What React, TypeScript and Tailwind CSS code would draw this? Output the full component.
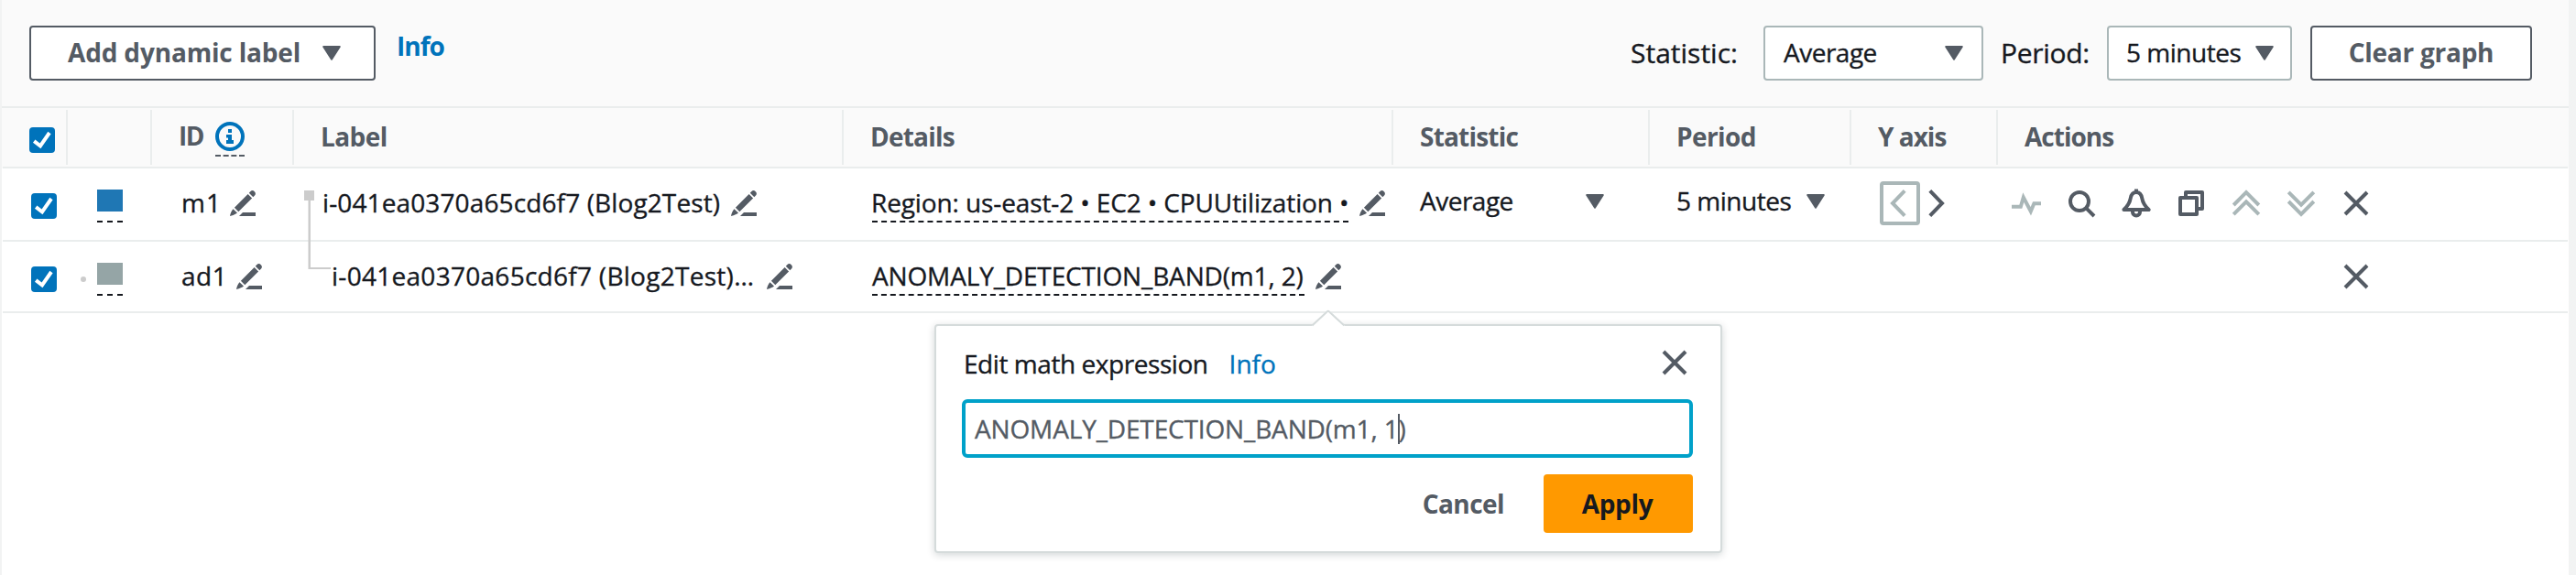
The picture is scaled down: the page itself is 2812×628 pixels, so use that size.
import type { ReactNode } from "react";

type IconProps = { children: ReactNode; className?: string };

function Icon({ children, className = "" }: IconProps) {
  return (
    <svg
      viewBox="0 0 16 16"
      className={`size-8 shrink-0 fill-none stroke-current stroke-2 ${className}`}
    >
      {children}
    </svg>
  );
}

const CloseIcon = () => (
  <Icon>
    <path d="M2 2l12 12M14 2L2 14" />
  </Icon>
);

function Pencil({ className = "" }: { className?: string }) {
  return (
    <svg viewBox="0 0 28 28" className={`size-7 shrink-0 fill-[#545b64] ${className}`}>
      <path d="M22.2 1.2Q24.6-1 26.8 1.2T26.8 5.8L25.3 7.2 20.8 2.7zM19.6 4L24.1 8.5 9.3 23.2 4.9 18.8zM3.5 20.2L8 24.6Q6 26.6 0 28 1 22.6 3.5 20.2zM14 24H28V28H10z" />
    </svg>
  );
}

function Caret({ className = "" }: { className?: string }) {
  return (
    <svg
      viewBox="0 0 20 16"
      className={`h-4 w-5 shrink-0 fill-[#545b64] stroke-[#545b64] stroke-2 ${className}`}
    >
      <path d="M1.2 1h17.6L10 14.6z" strokeLinejoin="round" />
    </svg>
  );
}

function Checkbox({ className = "" }: { className?: string }) {
  return (
    <span
      role="checkbox"
      aria-checked="true"
      className={`block size-7 shrink-0 rounded-[4px] bg-[#0073bb] ${className}`}
    >
      <svg viewBox="0 0 28 28" className="size-7 fill-none stroke-white stroke-4">
        <path d="M5.2 15.2L12 20.4L22 6" />
      </svg>
    </span>
  );
}

function InfoIcon() {
  return (
    <span className="mt-[6px] h-[38px] w-8 border-b-2 border-dashed border-[#545b64]">
      <svg viewBox="0 0 32 32" className="size-8">
        <circle cx="16" cy="16" r="14" className="fill-none stroke-[#0073bb] stroke-4" />
        <path
          d="M14 8h4v4h-4zM12 14h6v6h2v4h-8v-4h2v-2.500h-2z"
          className="fill-[#0073bb]"
        />
      </svg>
    </span>
  );
}

function HeaderCell({ className, children }: { className: string; children?: ReactNode }) {
  return (
    <div
      className={`flex h-15 shrink-0 items-center border-[#eaeded] pb-[2px] font-bold text-[#545b64] ${className}`}
    >
      {children}
    </div>
  );
}

function Cell({ className, children }: { className: string; children?: ReactNode }) {
  return (
    <div className={`flex shrink-0 items-start [-webkit-text-stroke-width:0.35px] ${className}`}>
      {children}
    </div>
  );
}

function Toolbar() {
  return (
    <div className="flex h-[118px] items-start border-b-2 border-[#eaeded] bg-[#fafafa] pt-7 pr-10 pl-[30px]">
      <button className="flex h-15 w-[378px] items-center justify-between rounded-[4px] border-2 border-[#545b64] bg-white pr-9 pb-[2px] pl-10 font-bold tracking-[-0.17px] text-[#545b64]">
        Add dynamic label
        <Caret className="mt-[2px]" />
      </button>
      <a className="mt-[2px] ml-[23px] font-bold tracking-[-0.97px] text-[#0073bb]">Info</a>

      <div className="ml-auto flex items-start [-webkit-text-stroke-width:0.35px]">
        <span className="mt-[10px] w-[145px] text-[30px] leading-10">Statistic:</span>
        <div className="flex h-15 w-[240px] items-center justify-between rounded-[4px] border-2 border-[#aab7b8] bg-white pr-5 pb-[2px] pl-5 tracking-[-0.5px]">
          Average
          <Caret className="mt-[2px]" />
        </div>
        <span className="mt-[10px] ml-[19px] w-[116px] text-[30px] leading-10 tracking-[-0.3px]">
          Period:
        </span>
        <div className="flex h-15 w-[202px] items-center justify-between rounded-[4px] border-2 border-[#aab7b8] bg-white pr-[18px] pb-[2px] pl-[19px] tracking-[-0.48px]">
          5 minutes
          <Caret className="mt-[2px]" />
        </div>
        <button className="ml-5 flex h-15 w-[242px] items-center justify-center rounded-[4px] border-2 border-[#545b64] bg-white pb-[2px] font-bold tracking-[-0.26px] text-[#545b64] [-webkit-text-stroke-width:0px]">
          Clear graph
        </button>
      </div>
    </div>
  );
}

function TableHeader() {
  return (
    <div className="-mx-px bg-[#fafafa] px-px">
      <div className="flex h-[66px] border-b-2 border-[#eaeded] pt-[2px]">
        <HeaderCell className="w-[71px] border-r-2 pl-[29px]">
          <Checkbox className="mt-2" />
        </HeaderCell>
        <HeaderCell className="w-[92px] border-r-2" />
        <HeaderCell className="w-[155px] border-r-2 pl-[29px]">
          <span className="mb-[2px] w-10 tracking-[-1.5px]">ID</span>
          <InfoIcon />
        </HeaderCell>
        <HeaderCell className="w-[600px] border-r-2 pl-[29px] tracking-[-0.57px]">Label</HeaderCell>
        <HeaderCell className="w-[600px] border-r-2 pl-[29px] tracking-[-0.8px]">
          Details
        </HeaderCell>
        <HeaderCell className="w-[280px] border-r-2 pl-[29px] tracking-[-0.79px]">
          Statistic
        </HeaderCell>
        <HeaderCell className="w-[220px] border-r-2 pl-[29px] tracking-[-0.6px]">Period</HeaderCell>
        <HeaderCell className="w-[160px] border-r-2 pl-[29px] tracking-[-1px]">Y axis</HeaderCell>
        <HeaderCell className="flex-1 pl-[29px] tracking-[-0.98px]">Actions</HeaderCell>
      </div>
    </div>
  );
}

function MetricRow() {
  return (
    <div className="flex h-20 border-b-2 border-[#eaeded]">
      <Cell className="w-[71px] pt-[27px] pl-[31px]">
        <Checkbox />
      </Cell>
      <Cell className="w-[92px] pt-[23px] pl-8">
        <span className="h-9 w-7 border-b-2 border-dashed border-[#16191f]">
          <span className="block h-6 bg-[#1f77b4]" />
        </span>
      </Cell>
      <Cell className="w-[155px] pt-[17px] pl-8">
        <span className="w-[53px] tracking-[1px]">m1</span>
        <Pencil className="mt-[7px]" />
      </Cell>
      <Cell className="relative w-[600px] pt-[17px] pl-[31px]">
        <svg
          viewBox="0 0 30 87"
          className="absolute top-6 left-[11px] h-[87px] w-[30px] fill-[#cccccc]"
        >
          <path d="M0 0h11v11H7v73h22v2H4.500V11H0z" />
        </svg>
        <span className="w-[446px] tracking-[0.12px]">i-041ea0370a65cd6f7 (Blog2Test)</span>
        <Pencil className="mt-[7px]" />
      </Cell>
      <Cell className="w-[600px] gap-3 pt-[17px] pl-[31px]">
        <span className="w-[520px] border-b-2 border-dashed border-[#16191f] -indent-px tracking-[-0.12px] whitespace-nowrap">
          Region: us-east-2 • EC2 • CPUUtilization •
        </span>
        <Pencil className="mt-[7px]" />
      </Cell>
      <Cell className="w-[280px] pt-[15px] pl-[29px]">
        <span className="w-[181px] tracking-[-0.5px]">Average</span>
        <Caret className="mt-[13px]" />
      </Cell>
      <Cell className="w-[220px] pt-[15px] pl-[29px]">
        <span className="w-[142px] tracking-[-0.48px]">5 minutes</span>
        <Caret className="mt-[13px]" />
      </Cell>
      <Cell className="w-[160px] pt-[14px] pl-[31px]">
        <span className="flex h-12 w-11 items-center justify-center rounded-[4px] border-4 border-[#aab7b8] text-[#aab7b8]">
          <Icon>
            <path d="M10.600 1.200L4 8l6.600 6.800" />
          </Icon>
        </span>
        <Icon className="mt-2 text-[#545b64]">
          <path d="M5.400 1.200L12 8l-6.600 6.800" />
        </Icon>
      </Cell>
      <Cell className="flex-1 gap-7 pt-[22px] pl-[15px] text-[#545b64]">
        <Icon className="text-[#aab7b8]">
          <path d="M0 9.900h4.900L6.400 4.800l4 7.600 1.800-4.300H16" />
        </Icon>
        <Icon>
          <circle cx="7" cy="7" r="5" />
          <path d="M10.700 10.700l4.300 4.300" />
        </Icon>
        <Icon>
          <path
            d="M1.200 11.500C3.600 9.200 4.400 8 4.800 5.500 5.200 3 6.200 2 8 2s2.800 1 3.200 3.500c.4 2.500 1.200 3.700 3.600 6zM8 .3V2"
            strokeLinejoin="round"
          />
          <path d="M6 12v.8a2 2 0 0 0 4 0V12" />
        </Icon>
        <Icon>
          <path d="M2 5h9v9H2zM5 5V2h9v9h-3" strokeLinejoin="round" />
        </Icon>
        <Icon className="text-[#aab7b8]">
          <path d="M1.100 9L8 2.100 14.900 9M1.100 14.100L8 7.200l6.900 6.900" />
        </Icon>
        <Icon className="text-[#aab7b8]">
          <path d="M1.100 7L8 13.900 14.900 7M1.100 1.900L8 8.800l6.900-6.900" />
        </Icon>
        <CloseIcon />
      </Cell>
    </div>
  );
}

function ExpressionRow() {
  return (
    <div className="flex h-[78px] border-b-2 border-[#eaeded]">
      <Cell className="w-[71px] pt-[27px] pl-[31px]">
        <Checkbox />
      </Cell>
      <Cell className="w-[92px] gap-3 pt-[23px] pl-[14px]">
        <span className="mt-[15px] size-1.5 rounded-full bg-[#cccccc]" />
        <span className="h-9 w-7 border-b-2 border-dashed border-[#16191f]">
          <span className="block h-6 bg-[#95a5a6]" />
        </span>
      </Cell>
      <Cell className="w-[155px] pt-[17px] pl-8">
        <span className="w-[60px] tracking-[0.5px]">ad1</span>
        <Pencil className="mt-[7px]" />
      </Cell>
      <Cell className="w-[600px] pt-[17px] pl-[41px]">
        <span className="w-[475px] tracking-[0.28px]">i-041ea0370a65cd6f7 (Blog2Test)…</span>
        <Pencil className="mt-[7px]" />
      </Cell>
      <Cell className="relative w-[600px] gap-3 pt-[17px] pl-[31px]">
        <span className="w-[472px] border-b-2 border-dashed border-[#16191f] tracking-[-0.15px] whitespace-nowrap">
          ANOMALY_DETECTION_BAND(m1, 2)
        </span>
        <Pencil className="mt-[7px]" />
        <ExpressionPopover />
      </Cell>
      <Cell className="w-[280px]" />
      <Cell className="w-[220px]" />
      <Cell className="w-[160px]" />
      <Cell className="flex-1 pt-[22px] pl-[375px] text-[#545b64]">
        <CloseIcon />
      </Cell>
    </div>
  );
}

function ExpressionPopover() {
  return (
    <div className="absolute top-[90px] left-[99px] h-[250px] w-[860px] rounded-[4px] border-2 border-[#d5dbdb] bg-white pt-6 pr-[30px] pl-7 shadow-[0_2px_8px_rgba(0,28,36,0.18)]">
      <svg viewBox="0 0 40 20" className="absolute -top-[18px] left-[408px] h-5 w-10">
        <path d="M2 18L20 0l18 18v2H2z" className="fill-white" />
        <path
          d="M2.500 17.500L18.800 2.200q1-1 2 0L37.300 17.500"
          className="fill-none stroke-[#d5dbdb] stroke-2"
        />
      </svg>
      <div className="flex h-14 items-start">
        <span className="mt-[-3px] pl-[2px] tracking-[-0.44px]">Edit math expression</span>
        <a className="mt-[-3px] ml-[23px] text-[#0073bb]">Info</a>
        <span className="ml-auto flex pr-1 text-[#545b64]">
          <CloseIcon />
        </span>
      </div>
      <div className="flex h-16 items-center rounded-[6px] border-4 border-[#00a1c9] bg-white pb-[1px] pl-[10px] text-[#545b64]">
        <span className="tracking-[-0.15px] whitespace-nowrap">
          ANOMALY_DETECTION_BAND(m1, 1
          <span className="relative">
            <span className="absolute top-[3px] -left-px h-[33px] w-[2px] bg-[#545b64]" />
          </span>
          )
        </span>
      </div>
      <div className="mt-[18px] flex h-16 items-center justify-end font-bold [-webkit-text-stroke-width:0px]">
        <span className="mr-[43px] pb-[1px] tracking-[-0.56px] text-[#545b64]">Cancel</span>
        <button className="flex h-16 w-[163px] items-center justify-center rounded-[4px] bg-[#ff9900] pr-[2px] pb-[1px] tracking-[-0.33px] text-[#16191f]">
          Apply
        </button>
      </div>
    </div>
  );
}

export default function App() {
  return (
    <div className="h-[628px] w-[2812px] overflow-hidden border-r-8 border-l-2 border-[#f2f3f3] bg-white font-['Open_Sans','Noto_Sans',sans-serif] text-[28px] leading-10 text-[#16191f]">
      <Toolbar />
      <div className="mx-px">
        <TableHeader />
        <MetricRow />
        <ExpressionRow />
      </div>
    </div>
  );
}
